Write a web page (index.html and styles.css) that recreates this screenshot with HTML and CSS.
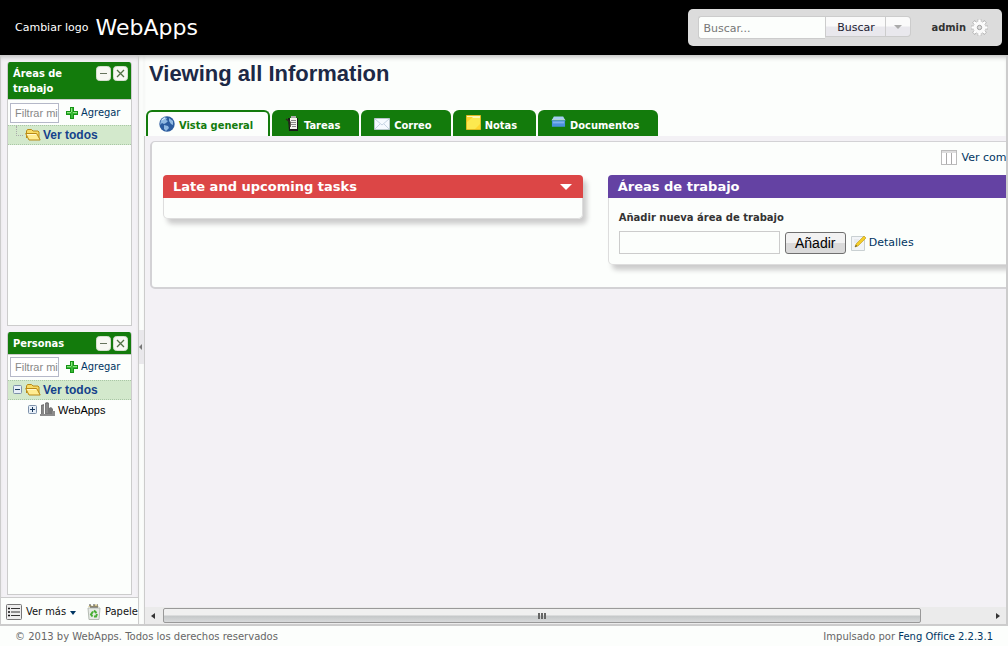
FILE: index.html
```html
<!DOCTYPE html>
<html lang="es">
<head>
<meta charset="utf-8">
<title>WebApps - Feng Office</title>
<link rel="stylesheet" href="styles.css">
</head>
<body>
<svg class="sprites" aria-hidden="true">
  <symbol id="plus" viewBox="0 0 14 14"><path d="M5 1h4v4h4v4H9v4H5V9H1V5h4z" fill="#159415"/><path d="M6 2h2v4h4v2H8v4H6V8H2V6h4z" fill="#39b936"/><path d="M6 2h1v4H2v1h4zM8 6h4v1H8z" fill="#8ee381"/></symbol>
  <symbol id="folder" viewBox="0 0 16 14"><path d="M1.500 10V3l1-1.500h4L8 3h5l1 1v7.500" fill="#f8dc66" stroke="#b88916"/><path d="M.7 5.500h11l3.500 6.500H4z" fill="#ffec91" stroke="#b88916"/><path d="M2 6.500h9" stroke="#fff9ce"/></symbol>
  <symbol id="minus-box" viewBox="0 0 15 15"><rect x=".5" y=".5" width="14" height="14" rx="3" fill="#f7f8f3" stroke="#d5dfcf"/><path d="M4 7.500h7" stroke="#66745d"/></symbol>
  <symbol id="close-box" viewBox="0 0 15 15"><rect x=".5" y=".5" width="14" height="14" rx="3" fill="#f7f8f3" stroke="#d5dfcf"/><path d="M4 4l7 7M11 4l-7 7" stroke="#527045" stroke-width="1.300"/></symbol>
  <symbol id="tree-box" viewBox="0 0 9 9"><rect x=".5" y=".5" width="8" height="8" rx="1" fill="#e7eff8" stroke="#7d91aa"/><path d="M2 4.500h5" stroke="#17375c"/></symbol>
</svg>

<header class="header">
  <div class="brand"><a class="change-logo" href="#">Cambiar logo</a><span class="brand-name">WebApps</span></div>
  <div class="user-box">
    <form class="search">
      <input class="search-input" type="text" placeholder="Buscar..." aria-label="Buscar">
      <button class="search-button" type="button">Buscar</button>
      <button class="search-more" type="button" aria-label="Más opciones"><span class="caret"></span></button>
    </form>
    <a class="user" href="#">admin
      <svg width="17" height="17" viewBox="0 0 18 18"><g stroke="#999" stroke-width="3.600"><path d="M9 0v18M0 9h18M2.700 2.700l12.600 12.600M15.300 2.700L2.700 15.300"/></g><g stroke="#fff" stroke-width="2.800"><path d="M9 .3v17.400M.3 9h17.400M3 3l12 12M15 3L3 15"/></g><circle cx="9" cy="9" r="6.300" fill="#fafafa"/><circle cx="9" cy="9" r="2.300" fill="#dcdcdc" stroke="#999"/></svg>
    </a>
  </div>
</header>

<main class="main">
  <aside class="sidebar">
    <div class="panels">
      <section class="panel">
        <div class="panel-head"><h2>Áreas de trabajo</h2>
          <div class="panel-tools"><button type="button" aria-label="Contraer"><svg width="15" height="15"><use href="#minus-box"/></svg></button><button type="button" aria-label="Cerrar"><svg width="15" height="15"><use href="#close-box"/></svg></button></div>
        </div>
        <div class="panel-filter"><input type="text" placeholder="Filtrar mi" aria-label="Filtrar áreas"><a href="#"><svg width="14" height="14"><use href="#plus"/></svg>Agregar</a></div>
        <a class="node selected" href="#"><span class="branch"></span><svg width="16" height="14"><use href="#folder"/></svg>Ver todos</a>
      </section>
      <section class="panel">
        <div class="panel-head"><h2>Personas</h2>
          <div class="panel-tools"><button type="button" aria-label="Contraer"><svg width="15" height="15"><use href="#minus-box"/></svg></button><button type="button" aria-label="Cerrar"><svg width="15" height="15"><use href="#close-box"/></svg></button></div>
        </div>
        <div class="panel-filter"><input type="text" placeholder="Filtrar mi" aria-label="Filtrar personas"><a href="#"><svg width="14" height="14"><use href="#plus"/></svg>Agregar</a></div>
        <a class="node selected" href="#"><span class="toggle"><svg width="9" height="9"><use href="#tree-box"/></svg></span><svg width="16" height="14"><use href="#folder"/></svg>Ver todos</a>
        <a class="node child" href="#"><svg width="9" height="9" viewBox="0 0 9 9"><use href="#tree-box" width="9" height="9"/><path d="M4.500 2v5" stroke="#17375c"/></svg><svg width="15" height="15" viewBox="0 0 15 15"><path d="M1 3l3-1v11H1zM5 1l2-1 2 1v12H5zM9 6l2-1 2 2v6H9z" fill="#777"/><path d="M0 12h15v2H0zM12 9h3v5h-3z" fill="#8c8c8c"/><path d="M7 2v9M3 4v8" stroke="#999"/></svg>WebApps</a>
      </section>
    </div>
    <div class="bottom-tools">
      <button type="button"><svg width="16" height="16" viewBox="0 0 16 16"><rect x=".5" y=".5" width="15" height="15" rx="1" fill="#eee" stroke="#777"/><path d="M5 4.500h9M5 8h9M5 11.500h9" stroke="#333"/><path d="M2 4.500h2M2 8h2M2 11.500h2" stroke="#111" stroke-width="1.600"/></svg>Ver más<span class="caret navy"></span></button>
      <button type="button"><svg width="14" height="16" viewBox="0 0 14 16"><path d="M1 4h12l-1 11.500H2z" fill="#e6eae5" stroke="#b5bbb3"/><path d="M1 3l2-2 3 1 3-2 3 3z" fill="#d8c98f"/><path d="M2 1h2M6 1h2M10 1h1M3 3h8" stroke="#444"/><path d="M7 6.500l2.500 2.500M10 10l-1 2.500H7M5.500 12.500L4 10.500 6 7.500" fill="none" stroke="#46ae32" stroke-width="2"/></svg>Papele</button>
    </div>
  </aside>

  <div class="splitter"><button type="button" aria-label="Contraer barra lateral"><span></span></button></div>

  <div class="workspace">
    <h1>Viewing all Information</h1>
    <nav class="tabs">
      <a class="tab active" href="#"><svg width="16" height="16" viewBox="0 0 16 16"><circle cx="8" cy="8" r="7.700" fill="#2c5c9f"/><path d="M2 4l3-3 3 1-1 2 2 1-2 2-2 1-2-1-2 2zM10 2l4 3v4l-2-1-2-3zM5 9l4 1 1 2-3 3-2-2z" fill="#8fb8e2"/><path d="M3 4l3-2" stroke="#e4f4ff"/></svg>Vista general</a>
      <a class="tab" href="#"><svg width="15" height="16" viewBox="0 0 15 16"><path d="M3 2h10v13H4z" fill="#191919"/><path d="M5 2h7v11H5z" fill="#f4f4ef"/><path d="M6 0h5v2H6z" fill="#aaa"/><path d="M6 4.500h5M6 6.500h5M6 8.500h5M7 10.500h4" stroke="#888"/><path d="M1 3l4 3v5" fill="none" stroke="#302721" stroke-width="1.500"/></svg>Tareas</a>
      <a class="tab" href="#"><svg width="16" height="14" viewBox="0 0 16 14"><path d="M.5 1.500h15v11H.5z" fill="#f6faff" stroke="#b8c7ca"/><path d="M1 2l7 6 7-6M1 12l5-5M15 12l-5-5" fill="none" stroke="#c6d4e3"/></svg>Correo</a>
      <a class="tab" href="#"><svg class="raised" width="15" height="16" viewBox="0 0 15 16"><path d="M.5 1.500h14v14H.5z" fill="#fce94f" stroke="#dfbb22"/><path d="M1 2h13v2H1z" fill="#fff7b3"/><path d="M1 8l6-5H1zM9 15h5v-5z" fill="#ffd62e"/></svg>Notas</a>
      <a class="tab" href="#"><svg class="raised" width="15" height="14" viewBox="0 0 16 14"><path d="M2 3l1-2h10l1 2v1H2z" fill="#a6cef5"/><path d="M0 5h16l-1 1v6H1V6z" fill="#4a91df"/><path d="M1 4.500h14" stroke="#d0e5fb"/><path d="M2 7.500h12" stroke="#7fb2ee" stroke-width="2"/></svg>Documentos</a>
    </nav>
    <div class="viewport">
      <div class="dashboard">
        <div class="view-option"><a href="#"><svg width="16" height="15" viewBox="0 0 16 15"><rect x=".5" y=".5" width="15" height="14" fill="#fff" stroke="#bbb"/><path d="M1 1h14v2H1z" fill="#ddd"/><path d="M5.500 3v11M10.500 3v11" stroke="#aaa"/></svg>Ver com</a></div>
        <div class="widgets">
          <section class="widget red"><h2>Late and upcoming tasks<span class="caret white"></span></h2><div class="empty"></div></section>
          <section class="widget purple"><h2>Áreas de trabajo</h2>
            <form class="add-form">
              <label for="area">Añadir nueva área de trabajo</label>
              <div class="add-row"><input id="area" type="text"><button type="button">Añadir</button><a href="#"><svg width="15" height="16" viewBox="0 0 15 16"><path d="M.5 1.500h13v14H.5z" fill="#f2f4f7" stroke="#c9d0d2"/><path d="M3 5h5M3 7h4" stroke="#dde1e5"/><path d="M13 1l2 2-8 8-3 1 1-3z" fill="#f4cd29" stroke="#bd9717" stroke-width=".6"/><path d="M4 12l2-1-1-1z" fill="#333"/></svg>Detalles</a></div>
            </form>
          </section>
        </div>
      </div>
      <div class="scrollbar"><span class="arrow left"></span><span class="thumb"><span class="grip"></span></span><span class="arrow right"></span></div>
    </div>
  </div>
</main>
<footer class="footer"><span>© 2013 by WebApps. Todos los derechos reservados</span><span>Impulsado por <a href="#">Feng Office 2.2.3.1</a></span></footer>
</body>
</html>
```

FILE: styles.css
```css
* { box-sizing: border-box; }
body { margin: 0; height: 100vh; display: flex; flex-direction: column; overflow: hidden; background: #fcfefc; color: #333; font: 11px/16px "DejaVu Sans", Verdana, sans-serif; }
a { color: #003562; text-decoration: none; }
button { font: inherit; padding: 0; cursor: pointer; }
input { font: inherit; min-width: 0; }
h1, h2 { margin: 0; }
svg { flex: none; }
.sprites { position: absolute; width: 0; height: 0; }

.header { display: flex; flex: none; justify-content: space-between; align-items: center; height: 55px; padding: 0 6px 0 15px; background: #000; }
.brand { display: flex; align-items: center; gap: 7px; }
.change-logo { color: #fff; font-size: 11px; }
.brand-name { color: #fff; font-size: 22px; line-height: 28px; }
.user-box { display: flex; align-items: center; gap: 20px; height: 37px; padding: 0 14px 0 10px; border-radius: 5px; background: #dcdcdc; }
.search { display: flex; align-items: flex-start; }
.search-input { width: 127px; height: 23px; padding: 2px 4px 0; border: 1px solid #ccc; border-right: 0; border-radius: 3px 0 0 3px; background: #fcfefc; }
.search-input::placeholder { color: #777; opacity: 1; }
.search-button, .search-more { height: 21px; border: 1px solid #ccc; background: linear-gradient(#fafafa 45%, #e9e8ed 55%); color: #223; }
.search-button { width: 61px; padding-top: 2px; }
.search-more { display: flex; justify-content: center; align-items: center; width: 25px; border-left: 0; border-radius: 0 4px 4px 0; }
.user { display: flex; align-items: center; gap: 5px; color: #333; font: bold 11px/16px "DejaVu Sans Condensed", Tahoma, "Noto Sans", sans-serif; }
.caret { display: inline-block; border: 4px solid transparent; border-top-color: #aaa; border-bottom: 0; }
.caret.navy { margin-top: 2px; border-width: 4px 3px 0; border-top-color: #003562; }
.caret.white { border-width: 6px 6px 0; border-top-color: #fff; }

.main { display: flex; flex: 1; min-height: 0; border: 1px solid #ccc; border-width: 0 2px 2px 1px; }
.sidebar { display: flex; flex: none; flex-direction: column; width: 138px; border-right: 1px solid #ccc; background: #f3f1f5; box-shadow: inset 0 5px 5px -3px #bbb; overflow: hidden; font-family: "DejaVu Sans Condensed", Tahoma, "Noto Sans", sans-serif; }
.panels { display: flex; flex: 1; flex-direction: column; gap: 6px; padding: 7px 6px 2px; }
.panel { flex: 1; border: 1px solid #ccc; border-top: 0; border-radius: 3px 3px 0 0; background: #fcfefc; overflow: hidden; }
.panel-head { display: flex; justify-content: space-between; align-items: flex-start; padding: 4px 3px 3px 5px; border-bottom: 1px solid #ccc; background: #137b0c; color: #fff; }
.panel-head h2 { font-size: 11px; line-height: 15px; }
.panel-tools { display: flex; gap: 2px; }
.panel-tools button { display: flex; border: 0; background: none; }
.panel-filter { display: flex; align-items: center; gap: 6px; height: 25px; padding: 0 2px; }
.panel-filter input { width: 49px; height: 20px; padding: 2px 0 2px 4px; border: 1px solid #b5b8c8; font: 11px "Liberation Sans", Arial, sans-serif; }
.panel-filter input::placeholder { color: #888; opacity: 1; }
.panel-filter a { display: flex; align-items: center; gap: 2px; }
.node { display: flex; align-items: center; gap: 2px; height: 20px; font-family: "Liberation Sans", Arial, sans-serif; }
.node.selected { border: 1px dotted #a9c7a5; border-width: 1px 0; background: #d3e9cc; color: #15428b; font-weight: bold; font-size: 12px; }
.branch { align-self: flex-start; width: 7px; height: 10px; margin-left: 8px; border: 1px dotted #aaa; border-width: 0 0 1px 1px; }
.toggle { display: flex; justify-content: center; width: 15px; padding-left: 4px; }
.node.child { gap: 3px; padding-left: 20px; color: #000; }
.bottom-tools { display: flex; flex: none; gap: 11px; height: 27px; padding: 1px 0 0 5px; border-top: 1px solid #ccc; background: #fcfefc; }
.bottom-tools button { display: flex; flex: none; align-items: center; gap: 4px; border: 0; background: none; color: #111; }

.splitter { display: flex; flex: none; align-items: center; width: 5px; padding-top: 14px; background: #fcfefc; box-shadow: inset 0 5px 5px -3px #bbb; }
.splitter button { display: flex; align-items: center; width: 5px; height: 34px; border: 0; background: #e9e8eb; }
.splitter span { border: 3px solid transparent; border-right-color: #777; border-left: 0; }

.workspace { display: flex; flex: 1; flex-direction: column; min-width: 0; box-shadow: inset 0 5px 5px -3px #bbb; }
h1 { padding: 5px 5px 23px; color: #1c2946; font: bold 22px/27px "Liberation Sans", Arial, sans-serif; }
.tabs { display: flex; flex: none; gap: 2px; padding-left: 2px; }
.tab { display: flex; align-items: center; gap: 4px; height: 26px; padding: 5px 19px 0 13px; border-radius: 6px 6px 0 0; background: #137b0c; color: #fff; font: bold 11px/16px "DejaVu Sans Condensed", Tahoma, "Noto Sans", sans-serif; }
.tab.active { padding: 3px 15px 0 11px; border: 2px solid #137b0c; border-bottom: 0; background: #fcfefc; color: #137b0c; }
.tab svg { margin-top: -3px; }
.tab .raised { margin-top: -7px; }
.viewport { display: flex; flex: 1; flex-direction: column; justify-content: space-between; min-height: 0; padding-top: 5px; border-left: 1px solid #ccc; background: #f3f1f5; overflow: hidden; }
.dashboard { width: 104%; margin-left: 5px; padding: 8px 16px 22px 11px; border: 2px solid #d3d2d5; border-top-width: 1px; border-radius: 5px; background: #fcfefc; }
.view-option { display: flex; justify-content: flex-end; height: 25px; padding-right: 21px; }
.view-option a { display: flex; align-items: flex-start; gap: 4px; }
.widgets { display: grid; grid-template-columns: 1fr 1fr; align-items: start; gap: 25px; }
.widget { border-radius: 5px; background: #fcfefc; box-shadow: 4px 5px 5px #ccc, 0 0 0 1px #ddd inset; }
.widget h2 { display: flex; justify-content: space-between; align-items: center; height: 23px; padding: 1px 11px 0 10px; border-radius: 4px 4px 0 0; color: #fff; font-size: 13px; line-height: 18px; }
.red h2 { background: #dc4646; }
.purple h2 { background: #6442a3; }
.empty { height: 21px; }
.add-form { padding: 12px 11px 11px; }
.add-form label { font-size: 10px; font-weight: bold; }
.add-row { display: flex; align-items: center; gap: 5px; margin-top: 5px; }
.add-row input { width: 161px; height: 23px; border: 1px solid #ccc; background: #fcfefc; }
.add-row button { width: 61px; height: 22px; border: 1px solid #707070; border-radius: 3px; background: linear-gradient(#f2f2f2 48%, #dadada 52%); color: #000; font: 14px "Liberation Sans", Arial, sans-serif; }
.add-row a { display: flex; align-items: center; gap: 3px; }
.scrollbar { display: flex; flex: none; align-items: center; height: 17px; background: #ebebeb; }
.arrow { flex: none; border: 3px solid transparent; }
.arrow.left { margin: 0 8px 0 6px; border-right: 4px solid #333; border-left: 0; }
.arrow.right { margin: 0 6px 0 auto; border-left: 4px solid #333; border-right: 0; }
.thumb { display: flex; justify-content: center; align-items: center; width: 88%; height: 15px; border: 1px solid #999; border-radius: 2px; background: linear-gradient(#f0f0f0 45%, #c5c8c9 55%, #d8dadb); }
.grip { width: 8px; height: 6px; background: repeating-linear-gradient(90deg, #666 0 2px, transparent 2px 3px); }
.footer { display: flex; flex: none; justify-content: space-between; height: 20px; padding: 3px 15px 0; color: #666; font-size: 10px; }
```
